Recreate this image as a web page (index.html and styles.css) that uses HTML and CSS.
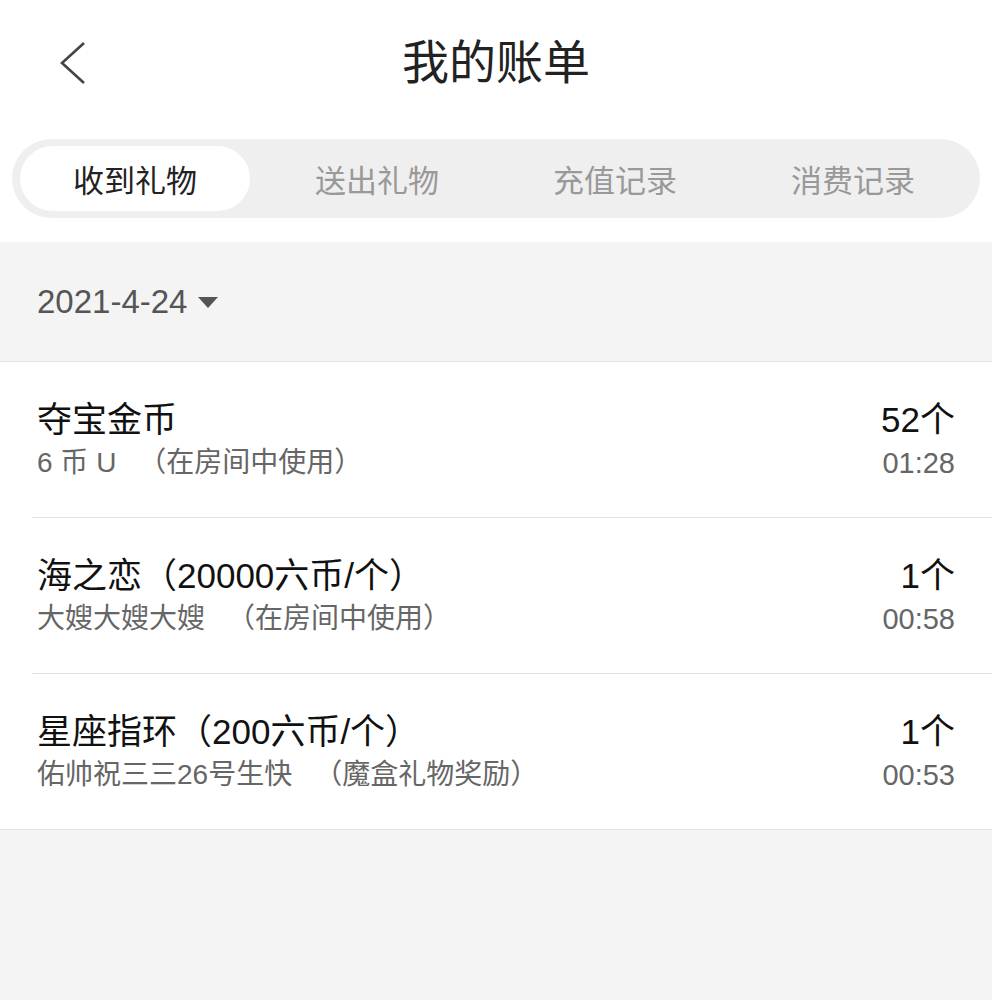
FILE: index.html
```html
<!DOCTYPE html>
<html lang="zh-CN">
<head>
    <meta charset="UTF-8">
    <meta name="viewport" content="width=device-width, initial-scale=1.0">
    <title>我的账单</title>
    <link rel="stylesheet" href="styles.css">
</head>
<body>
    <header class="top">
        <a class="back" href="#">
            <svg width="30" height="46" viewBox="0 0 30 46">
                <polyline points="26,3 4,23 26,43" fill="none" stroke="#444" stroke-width="2.6" stroke-linejoin="miter"/>
            </svg>
        </a>
        <h1>我的账单</h1>
    </header>

    <div class="tabs-wrap">
        <nav class="tabs">
            <span class="tab active">收到礼物</span>
            <span class="tab">送出礼物</span>
            <span class="tab">充值记录</span>
            <span class="tab">消费记录</span>
        </nav>
    </div>

    <main class="content">
        <div class="date">2021-4-24 <span class="caret"></span></div>

        <ul class="records">
            <li class="record">
                <div class="info">
                    <div class="name">夺宝金币</div>
                    <div class="sub">6 币 U<span class="note">（在房间中使用）</span></div>
                </div>
                <div class="meta">
                    <div class="count">52个</div>
                    <div class="time">01:28</div>
                </div>
            </li>
            <li class="record">
                <div class="info">
                    <div class="name">海之恋（20000六币/个）</div>
                    <div class="sub">大嫂大嫂大嫂<span class="note">（在房间中使用）</span></div>
                </div>
                <div class="meta">
                    <div class="count">1个</div>
                    <div class="time">00:58</div>
                </div>
            </li>
            <li class="record">
                <div class="info">
                    <div class="name">星座指环（200六币/个）</div>
                    <div class="sub">佑帅祝三三26号生快<span class="note">（魔盒礼物奖励）</span></div>
                </div>
                <div class="meta">
                    <div class="count">1个</div>
                    <div class="time">00:53</div>
                </div>
            </li>
        </ul>
    </main>
</body>
</html>
```

FILE: styles.css
```css
body {
    margin: 0;
    padding: 0;
    background: #f4f4f4;
    font-family: "Liberation Sans", "Noto Sans CJK SC", sans-serif;
    color: #111;
}

.top {
    height: 117px;
    padding-bottom: 8px;
    background: #fff;
    display: flex;
    align-items: center;
    justify-content: center;
    position: relative;
}

.top h1 {
    margin: 0;
    font-family: "Noto Sans CJK SC", sans-serif;
    font-size: 47px;
    font-weight: 400;
    color: #222;
}

.back {
    position: absolute;
    left: 58px;
    top: 40px;
    display: block;
    line-height: 0;
}

.tabs-wrap {
    background: #fff;
    padding: 14px 12px 24px;
}

.tabs {
    display: grid;
    grid-template-columns: repeat(4, 1fr);
    background: #efefef;
    border-radius: 40px;
    height: 79px;
    padding: 7px 8px;
    box-sizing: border-box;
}

.tab {
    display: flex;
    align-items: center;
    justify-content: center;
    font-family: "Noto Sans CJK SC", sans-serif;
    font-size: 31px;
    color: #999;
    border-radius: 33px;
}

.tab.active {
    background: #fff;
    color: #222;
    margin-right: 8px;
}

.date {
    height: 120px;
    box-sizing: border-box;
    padding-left: 37px;
    display: flex;
    align-items: center;
    font-size: 33px;
    color: #555;
    border-bottom: 1px solid #e2e2e2;
}

.caret {
    display: inline-block;
    margin-left: 11px;
    margin-top: 2px;
    border-left: 10px solid transparent;
    border-right: 10px solid transparent;
    border-top: 11px solid #555;
}

.records {
    list-style: none;
    margin: 0;
    padding: 0;
    background: #fff;
    border-bottom: 1px solid #e2e2e2;
}

.record {
    height: 155px;
    margin-left: 32px;
    padding: 0 37px 0 5px;
    display: flex;
    align-items: center;
    justify-content: space-between;
    border-bottom: 1px solid #e2e2e2;
}

.record:last-child {
    border-bottom: none;
}

.name {
    font-size: 35px;
    line-height: 46px;
    color: #111;
}

.sub {
    font-size: 28px;
    line-height: 40px;
    color: #666;
}

.note {
    margin-left: 22px;
}

.meta {
    text-align: right;
}

.count {
    font-size: 35px;
    line-height: 46px;
    color: #111;
}

.time {
    font-size: 29px;
    line-height: 40px;
    color: #666;
}
```
